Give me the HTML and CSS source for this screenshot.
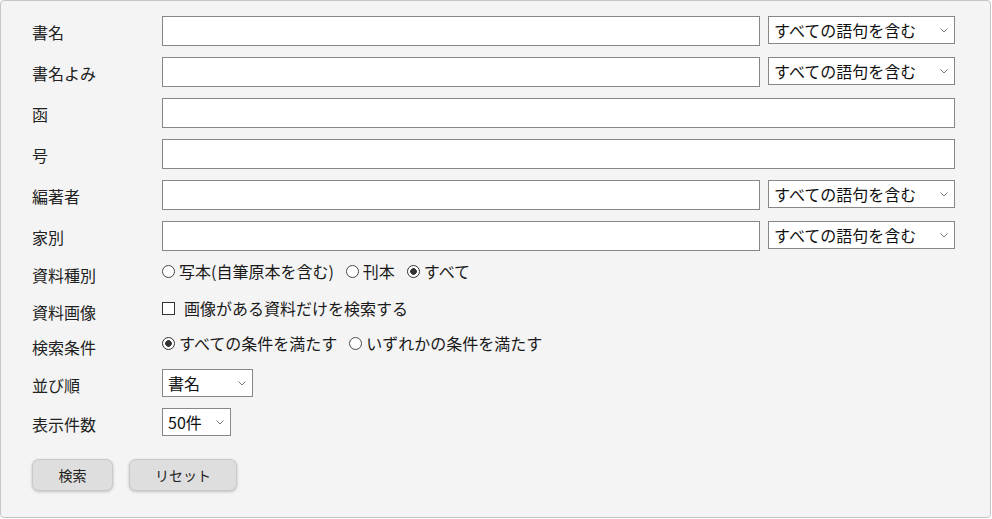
FILE: index.html
```html
<!DOCTYPE html>
<html lang="ja">
<head>
<meta charset="utf-8">
<title>検索</title>
<link rel="stylesheet" href="styles.css">
</head>
<body>
<form class="panel">
  <div class="row field-row">
    <label class="label">書名</label>
    <input class="text" type="text">
    <span class="select-wrap match"><select class="select"><option>すべての語句を含む</option></select><svg class="chev" viewBox="0 0 8 5" width="8" height="5"><path d="M0.5 0.5 L4 4 L7.5 0.5" fill="none" stroke="#7a7a7a" stroke-width="1"/></svg></span>
  </div>
  <div class="row field-row">
    <label class="label">書名よみ</label>
    <input class="text" type="text">
    <span class="select-wrap match"><select class="select"><option>すべての語句を含む</option></select><svg class="chev" viewBox="0 0 8 5" width="8" height="5"><path d="M0.5 0.5 L4 4 L7.5 0.5" fill="none" stroke="#7a7a7a" stroke-width="1"/></svg></span>
  </div>
  <div class="row field-row">
    <label class="label">函</label>
    <input class="text" type="text">
  </div>
  <div class="row field-row">
    <label class="label">号</label>
    <input class="text" type="text">
  </div>
  <div class="row field-row">
    <label class="label">編著者</label>
    <input class="text" type="text">
    <span class="select-wrap match"><select class="select"><option>すべての語句を含む</option></select><svg class="chev" viewBox="0 0 8 5" width="8" height="5"><path d="M0.5 0.5 L4 4 L7.5 0.5" fill="none" stroke="#7a7a7a" stroke-width="1"/></svg></span>
  </div>
  <div class="row field-row">
    <label class="label">家別</label>
    <input class="text" type="text">
    <span class="select-wrap match"><select class="select"><option>すべての語句を含む</option></select><svg class="chev" viewBox="0 0 8 5" width="8" height="5"><path d="M0.5 0.5 L4 4 L7.5 0.5" fill="none" stroke="#7a7a7a" stroke-width="1"/></svg></span>
  </div>
  <div class="row option-row type-row">
    <span class="label">資料種別</span>
    <div class="options">
      <label class="opt"><input class="radio" type="radio" name="type">写本(自筆原本を含む)</label>
      <label class="opt"><input class="radio" type="radio" name="type">刊本</label>
      <label class="opt"><input class="radio" type="radio" name="type" checked>すべて</label>
    </div>
  </div>
  <div class="row option-row image-row">
    <span class="label">資料画像</span>
    <div class="options">
      <label class="opt opt-check"><input class="check" type="checkbox">画像がある資料だけを検索する</label>
    </div>
  </div>
  <div class="row option-row cond-row">
    <span class="label">検索条件</span>
    <div class="options">
      <label class="opt"><input class="radio" type="radio" name="cond" checked>すべての条件を満たす</label>
      <label class="opt"><input class="radio" type="radio" name="cond">いずれかの条件を満たす</label>
    </div>
  </div>
  <div class="row select-row sort-row">
    <span class="label">並び順</span>
    <span class="select-wrap sort"><select class="select"><option>書名</option></select><svg class="chev" viewBox="0 0 8 5" width="8" height="5"><path d="M0.5 0.5 L4 4 L7.5 0.5" fill="none" stroke="#7a7a7a" stroke-width="1"/></svg></span>
  </div>
  <div class="row select-row count-row">
    <span class="label">表示件数</span>
    <span class="select-wrap count"><select class="select"><option>50件</option></select><svg class="chev" viewBox="0 0 8 5" width="8" height="5"><path d="M0.5 0.5 L4 4 L7.5 0.5" fill="none" stroke="#7a7a7a" stroke-width="1"/></svg></span>
  </div>
  <div class="buttons">
    <button class="btn btn-search" type="button">検索</button>
    <button class="btn btn-reset" type="button">リセット</button>
  </div>
</form>
</body>
</html>
```

FILE: styles.css
```css
html, body {
  margin: 0;
  padding: 0;
  background: #ffffff;
}
body {
  font-family: "Noto Sans CJK JP", "Noto Sans", sans-serif;
  color: #1e1e1e;
}
.panel {
  box-sizing: border-box;
  width: 991px;
  height: 518px;
  margin: 0;
  padding: 15px 35px 0 31px;
  background: #f4f4f4;
  border: 1px solid #c6c6c6;
  border-radius: 4px;
  display: flex;
  flex-direction: column;
}
.row {
  display: flex;
  align-items: flex-start;
}
.label {
  width: 130px;
  flex-shrink: 0;
  font-size: 16px;
  line-height: 22px;
  padding-top: 5px;
  color: #222;
}
.field-row {
  height: 30px;
}
.field-row + .field-row {
  margin-top: 11px;
}
.text {
  box-sizing: border-box;
  flex: 1;
  min-width: 0;
  height: 30px;
  margin: 0;
  padding: 0 6px;
  border: 1px solid #878787;
  border-radius: 0;
  background: #fff;
  font: 16px "Noto Sans CJK JP", sans-serif;
  outline: none;
}
.select-wrap {
  position: relative;
  display: inline-block;
  flex-shrink: 0;
}
.select-wrap.match {
  width: 187px;
  margin-left: 8px;
}
.select-wrap.sort {
  width: 91px;
}
.select-wrap.count {
  width: 69px;
}
.select {
  -webkit-appearance: none;
  appearance: none;
  box-sizing: border-box;
  width: 100%;
  height: 28px;
  margin: 0;
  padding: 0 20px 0 5px;
  border: 1px solid #878787;
  border-radius: 0;
  background: #fff;
  color: #111;
  font: 16px/26px "Noto Sans CJK JP", sans-serif;
  outline: none;
}
.chev {
  position: absolute;
  right: 7px;
  top: 12px;
  pointer-events: none;
}
.option-row {
  height: 24px;
}
.type-row {
  margin-top: 8px;
}
.image-row {
  margin-top: 13px;
}
.cond-row {
  margin-top: 11px;
}
.options {
  display: flex;
  align-items: center;
  height: 24px;
  gap: 12px;
  font-size: 16px;
  line-height: 22px;
  color: #1a1a1a;
}
.opt {
  display: inline-flex;
  align-items: center;
  gap: 4px;
}
.opt-check {
  gap: 9px;
}
.radio {
  -webkit-appearance: none;
  appearance: none;
  box-sizing: border-box;
  width: 13px;
  height: 13px;
  margin: 0;
  border: 1px solid #4a4a4a;
  border-radius: 50%;
  background: #fff;
}
.radio:checked {
  border-color: #333;
  background: radial-gradient(circle, #333 0 3px, #fff 3.6px);
}
.check {
  -webkit-appearance: none;
  appearance: none;
  box-sizing: border-box;
  width: 13px;
  height: 13px;
  margin: 0;
  border: 1px solid #333;
  border-radius: 0;
  background: #fff;
}
.select-row {
  height: 28px;
}
.sort-row {
  margin-top: 14px;
}
.count-row {
  margin-top: 11px;
}
.buttons {
  display: flex;
  gap: 16px;
  margin-top: 23px;
}
.btn {
  box-sizing: border-box;
  height: 32px;
  margin: 0;
  padding: 0;
  border: 1px solid #c9c9c9;
  border-radius: 7px;
  background: #dedede;
  box-shadow: 0 1px 3px rgba(0, 0, 0, 0.22);
  color: #222;
  font: 14px/30px "Noto Sans CJK JP", sans-serif;
  cursor: pointer;
}
.btn-search {
  width: 81px;
}
.btn-reset {
  width: 108px;
}
```
